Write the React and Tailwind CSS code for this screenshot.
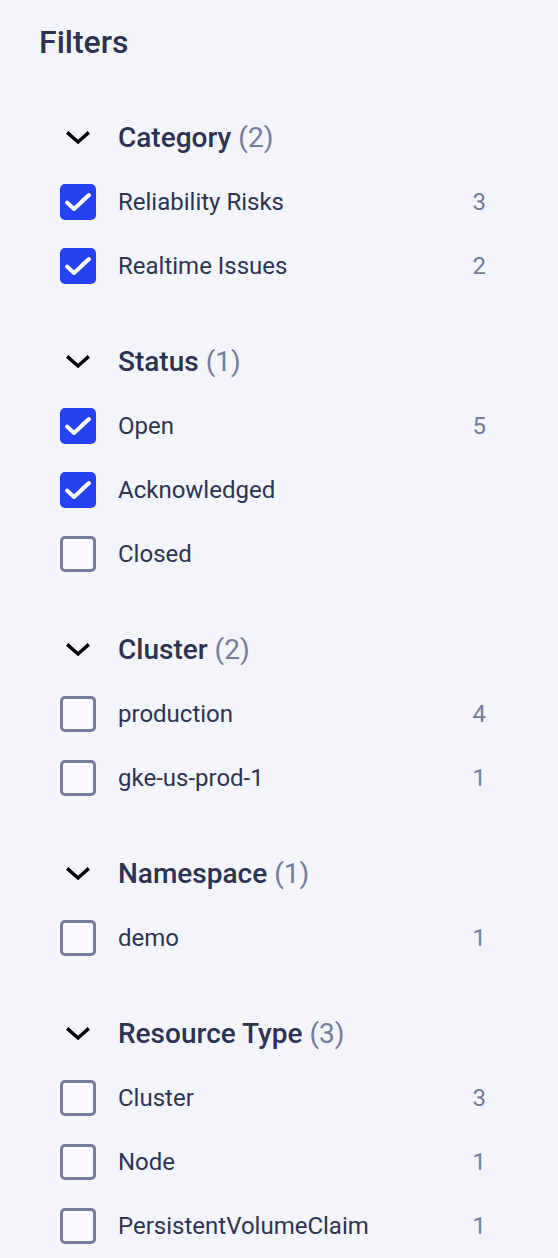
import React, { useState } from "react";

const SECTIONS = [
  {
    title: "Category",
    items: [
      { label: "Reliability Risks", count: 3, checked: true },
      { label: "Realtime Issues", count: 2, checked: true },
    ],
  },
  {
    title: "Status",
    selected: 1,
    items: [
      { label: "Open", count: 5, checked: true },
      { label: "Acknowledged", checked: true },
      { label: "Closed", checked: false },
    ],
  },
  {
    title: "Cluster",
    items: [
      { label: "production", count: 4 },
      { label: "gke-us-prod-1", count: 1 },
    ],
  },
  {
    title: "Namespace",
    items: [{ label: "demo", count: 1 }],
  },
  {
    title: "Resource Type",
    items: [
      { label: "Cluster", count: 3 },
      { label: "Node", count: 1 },
      { label: "PersistentVolumeClaim", count: 1 },
    ],
  },
];

function Checkbox({ checked, onChange }) {
  return (
    <button
      onClick={onChange}
      className={`h-9 w-9 shrink-0 rounded-[5px] flex items-center justify-center ${
        checked ? "bg-[#2541f2]" : "border-[3px] border-[#767d9b] bg-[#f9f9fd]"
      }`}
    >
      {checked && (
        <svg width="28" height="20" viewBox="0 0 28 20" fill="none">
          <path d="M3 10.5 L10 17 L25 3" stroke="white" strokeWidth="4" strokeLinecap="round" strokeLinejoin="round" />
        </svg>
      )}
    </button>
  );
}

function Section({ section }) {
  const [items, setItems] = useState(section.items);
  const toggle = (i) => setItems(items.map((it, j) => (j === i ? { ...it, checked: !it.checked } : it)));
  const selected = section.selected ?? section.items.length;

  return (
    <div className="flex flex-col">
      <div className="h-16 flex items-center pl-[66px] gap-[28px]">
        <svg width="24" height="14" viewBox="0 0 24 14" fill="none">
          <path d="M2.5 2.5 L12 11 L21.5 2.5" stroke="black" strokeWidth="3.5" strokeLinecap="square" />
        </svg>
        <h3 className="text-[28px] font-medium text-[#2c3250]">
          {section.title} <span className="text-[#757c9b] font-normal">({selected})</span>
        </h3>
      </div>
      {items.map((it, i) => (
        <div key={it.label} className="h-16 flex items-center pl-[60px]">
          <Checkbox checked={it.checked} onChange={() => toggle(i)} />
          <span className="ml-[22px] text-[24px] text-[#2e3450] flex-1">{it.label}</span>
          {it.count != null && <span className="text-[24px] text-[#737a99] w-[14px] text-right">{it.count}</span>}
        </div>
      ))}
    </div>
  );
}

export default function App() {
  return (
    <div className="w-[558px] h-[1258px] bg-[#f4f5fb] pr-[72px] overflow-hidden" style={{ fontFamily: "Roboto, sans-serif" }}>
      <h2 className="pl-[39px] h-[74px] pt-[18px] text-[32px] font-medium text-[#2c3250] leading-[48px]">Filters</h2>
      <div className="flex flex-col gap-8 pt-[32px]">
        {SECTIONS.map((s) => (
          <Section key={s.title} section={s} />
        ))}
      </div>
    </div>
  );
}
